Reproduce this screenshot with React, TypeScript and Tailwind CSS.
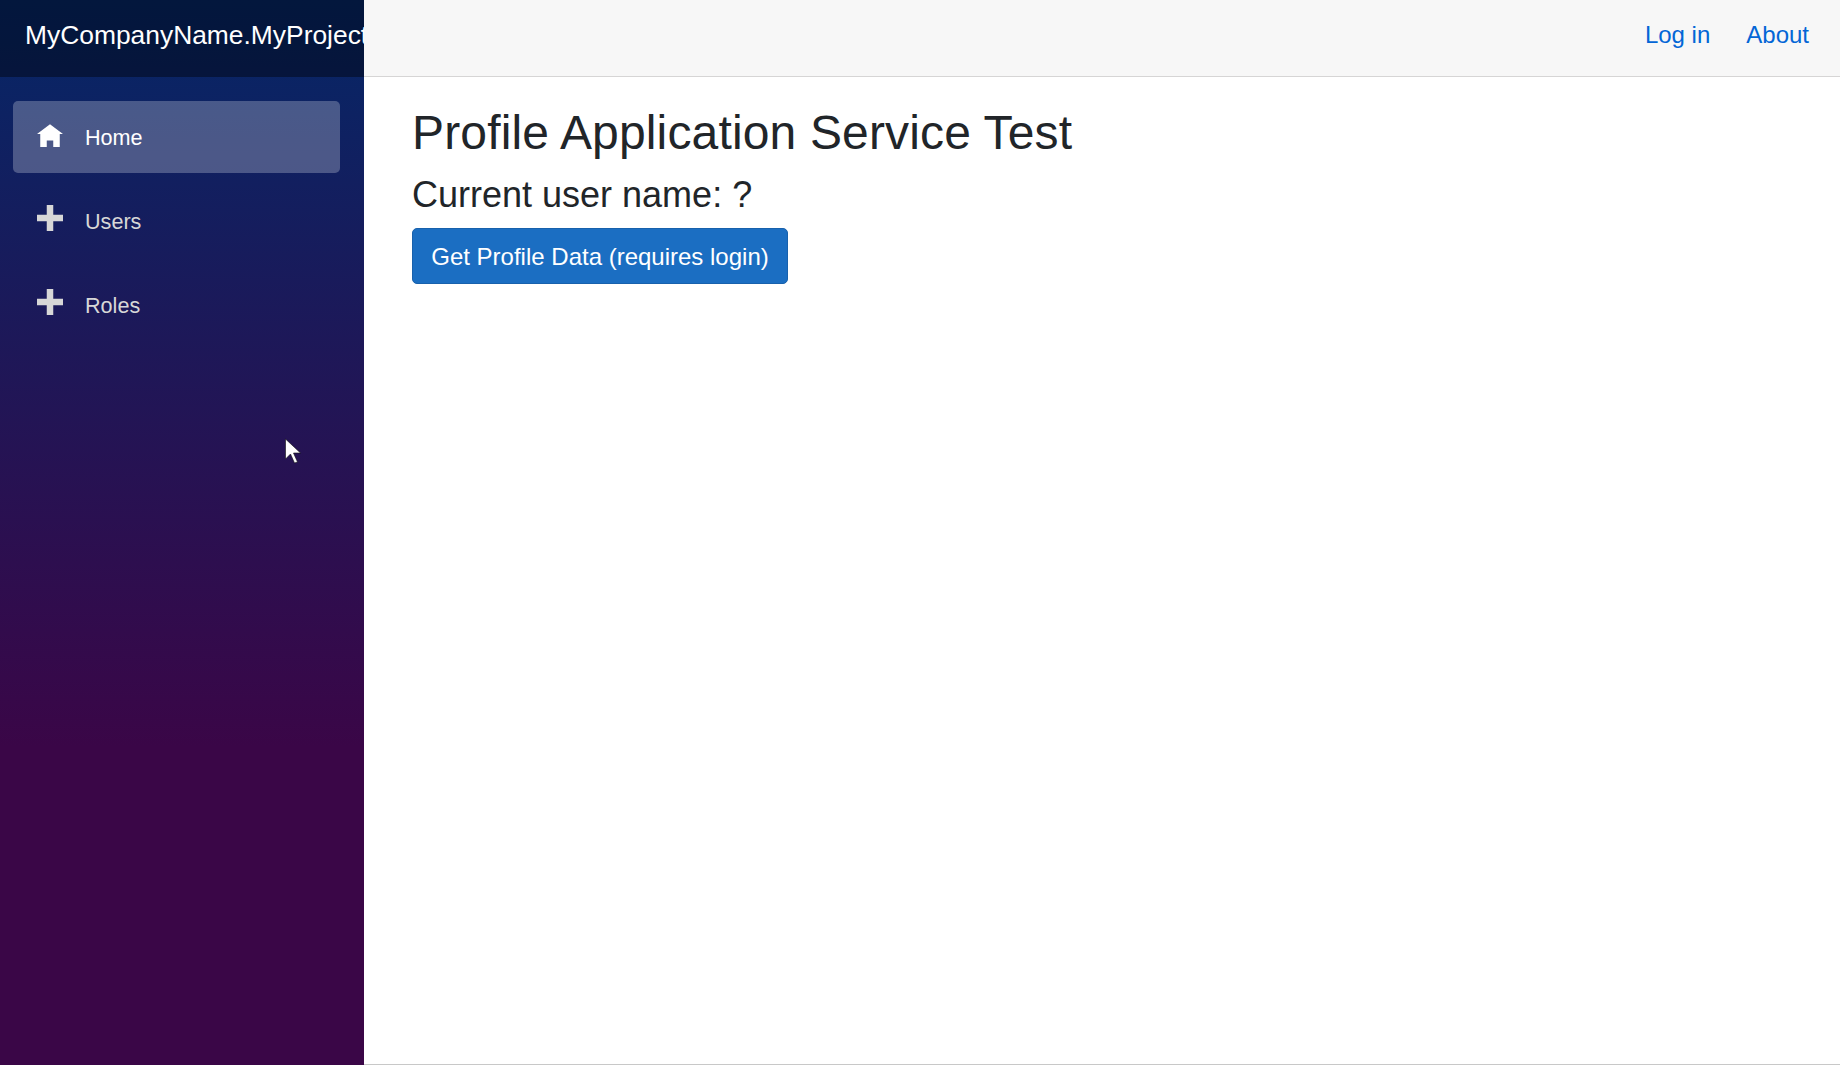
const font = "font-['Liberation_Sans',Arial,sans-serif]";

function HomeIcon() {
  return (
    <svg viewBox="0 -1 8 8" className="w-[26px] h-[26px] fill-current shrink-0 self-start mt-5">
      <path d="M4 0l-4 3h1v4h2v-2h2v2h2v-4.03l1 .03-4-3z" />
    </svg>
  );
}

function PlusIcon() {
  return (
    <svg viewBox="0 0 8 8" className="w-[26px] h-[26px] fill-current shrink-0 self-start mt-5">
      <path d="M3 0v3h-3v2h3v3h2v-3h3v-2h-3v-3h-2z" />
    </svg>
  );
}

function NavItem({ label, active, icon }: { label: string; active?: boolean; icon: React.ReactNode }) {
  return (
    <a
      href="#"
      className={`flex items-center h-[72px] pl-6 gap-[22px] rounded-[5px] text-[21.6px] ${
        active ? 'bg-white/25 text-white' : 'text-[#d7d7d7]'
      }`}
    >
      {icon}
      <span className="pt-[2px]">{label}</span>
    </a>
  );
}

export default function App() {
  return (
    <div className={`relative flex h-screen w-full overflow-hidden bg-white ${font}`}>
      {/* Sidebar */}
      <aside className="w-[364px] shrink-0 bg-[linear-gradient(180deg,#052767_0%,#3a0647_70%)]">
        <div className="flex items-center h-[77px] pl-[25px] pb-[5px] bg-black/40 text-white text-[26.4px] whitespace-nowrap overflow-hidden">
          MyCompanyName.MyProject
        </div>
        <nav className="flex flex-col gap-3 pt-6 pl-[13px] pr-6">
          <NavItem label="Home" active icon={<HomeIcon />} />
          <NavItem label="Users" icon={<PlusIcon />} />
          <NavItem label="Roles" icon={<PlusIcon />} />
        </nav>
      </aside>

      {/* Main */}
      <main className="flex-1 flex flex-col border-b border-[#c8c8c8]">
        <header className="flex items-center justify-end h-[77px] gap-9 pr-[31px] pb-[6px] bg-[#f7f7f7] border-b border-[#d6d5d5] text-[24px] text-[#0366d6]">
          <a href="#">Log in</a>
          <a href="#">About</a>
        </header>
        <div className="pl-12 pt-[28px] text-[#212529]">
          <h1 className="text-[48px] leading-[56px] tracking-[0.15px]">Profile Application Service Test</h1>
          <h3 className="text-[36px] leading-[42px] mt-[13px]">Current user name: ?</h3>
          <button className="mt-[12px] pt-[2px] h-[56px] w-[376px] rounded-[5px] bg-[#1b6ec2] border border-[#1861ac] text-white text-[24px]">
            Get Profile Data (requires login)
          </button>
        </div>
      </main>

      {/* Mouse pointer */}
      <svg viewBox="0 0 18 26" className="absolute left-[284px] top-[438px] w-[19px] h-[26px]">
        <path d="M1 1v20l5-5 4 9 3-1-4-9h7z" fill="#fff" stroke="#111" strokeWidth="0.6" />
      </svg>
    </div>
  );
}
